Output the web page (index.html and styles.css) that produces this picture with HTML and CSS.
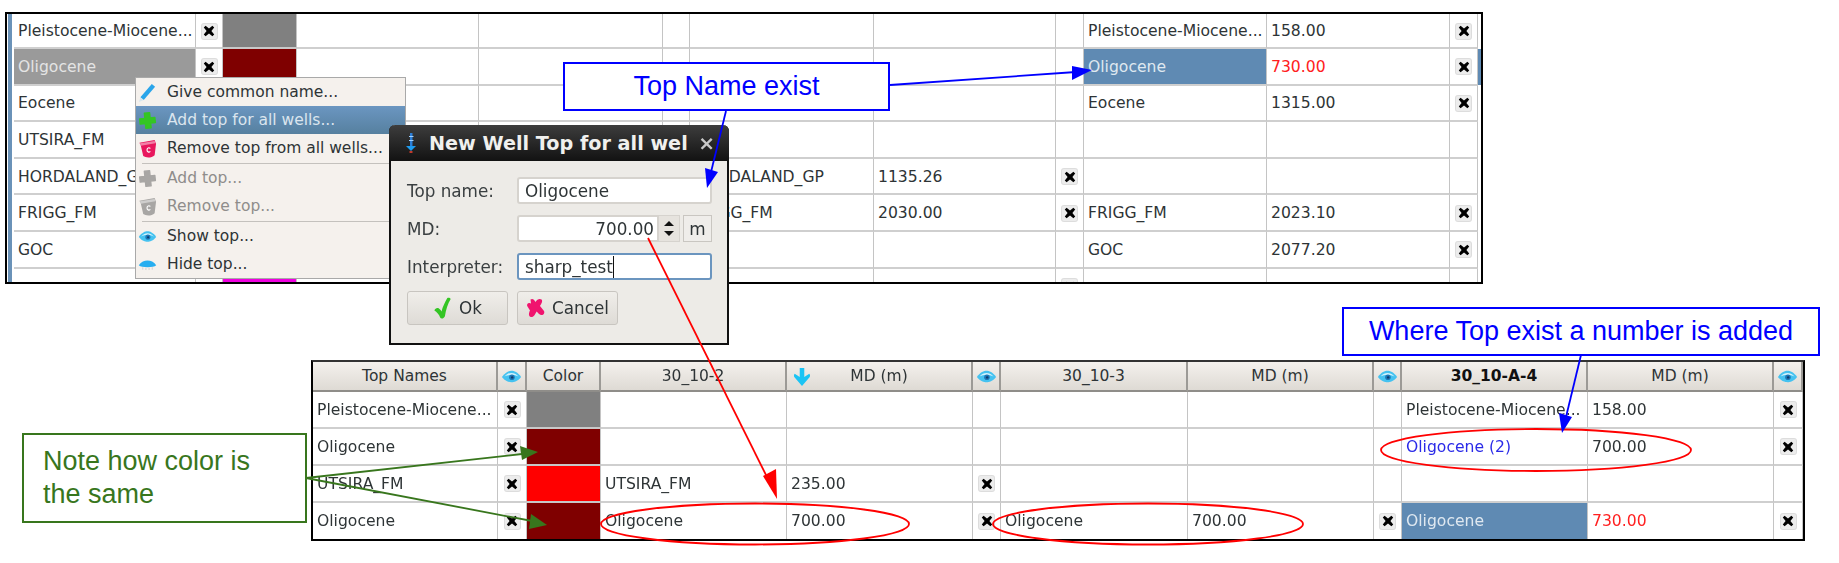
FILE: index.html
```html
<!DOCTYPE html>
<html lang="en">
<head>
<meta charset="utf-8">
<title>Well tops</title>
<link rel="stylesheet" href="styles.css">
</head>
<body>
<svg class="defs" width="0" height="0" aria-hidden="true">
  <symbol id="i-x" viewBox="0 0 12 12"><path d="M2.6 .8 6 3.6 9.4 .8 11.2 2.6 8.4 6l2.8 3.4-1.8 1.8L6 8.4 2.6 11.2 .8 9.4 3.6 6 .8 2.6z" fill="#000"/></symbol>
  <symbol id="i-eye" viewBox="0 0 24 16"><path d="M1 8.500C5 3 9 1.500 12 1.500s7 1.500 11 7c-4 5-8 6-11 6s-7-1-11-6z" fill="#45c2f0"/><path d="M4 8C7 5 9 4 12 4s5 1 8 4c-3-1.500-5-1.800-8-1.800S7 6.500 4 8z" fill="#d2f2fc"/><circle cx="12.500" cy="8.800" r="3.200" fill="#1c78b8"/><circle cx="12.800" cy="9" r="1.400" fill="#123a6a"/></symbol>
  <symbol id="i-hide" viewBox="0 0 24 16"><path d="M1 9C4 4.500 8 3 12 3s8 1.500 11 6c-2 1.800-6 2.500-11 2.500S3 10.800 1 9z" fill="#27aef0"/><path d="M6 11.500v3M10 12v3M14 12v3M18 11.500v3" stroke="#c9c9c9" stroke-width="1"/></symbol>
  <symbol id="i-pen" viewBox="0 0 20 20"><path d="M14.500 1 18 4 6 18l-3.500-3z" fill="#2aa5ea"/><path d="M2.500 15 6 18l-5 2z" fill="#d6e6ee"/></symbol>
  <symbol id="i-plus" viewBox="0 0 20 20"><path d="M7.500 2h5.500v5.500h5v5.500h-5v5h-5.500v-5H2V7.500h5.500z" fill="currentColor" stroke="currentColor" stroke-width="1.500" stroke-linejoin="round" transform="rotate(-6 10 10)"/></symbol>
  <symbol id="i-bin" viewBox="0 0 20 20"><path d="M1.500 4 17.500 1 19 5l-1.500 12c-3 3-9 3-12 1L3 7z" fill="currentColor"/><path d="M2 4.500 17.500 2l.8 2.500L3 7z" fill="#fff" opacity=".45"/><path d="M13 10c-1.500-1.500-3.500-.5-3.500 1.500s2 3 3.500 1.500" fill="none" stroke="#fff" stroke-width="1.200"/></symbol>
  <symbol id="i-down" viewBox="0 0 20 22"><path d="M7.500 1h5v10l5.500-3.500c1 1 1 2.500.5 3.500L10 21 1.500 11c-.5-1-.5-2.500.5-3.500L7.500 11z" fill="#1cc4f4"/></symbol>
  <symbol id="i-well" viewBox="0 0 12 22"><rect x="5" y="1" width="2.500" height="14" fill="#2c7fd8"/><path d="M1 14h10l-5 5z" fill="#1d9bf0"/><rect x="4" y="4" width="4.500" height="1" fill="#9fd0ff"/><rect x="4" y="8" width="4.500" height="1" fill="#9fd0ff"/><rect x="4.500" y="19" width="3" height="2" fill="#c0392b"/></symbol>
  <symbol id="i-ok" viewBox="0 0 20 24"><path d="M14.500 1c1.500-.5 3 0 3.500 1-3 5-5 11-6 18-1.500 3-4 3-5 1.500C6 18 3.500 15.500 1 14c.5-2 2.500-3 4-2.500 1.500 1 2.500 2 3.500 3.500 1-4.500 3.500-9.500 6-14z" fill="#34c524"/></symbol>
  <symbol id="i-no" viewBox="0 0 20 22"><path d="M4.500 2c2-1.500 3.500 0 5 2.500C11 2 13.500.5 15.500 2c1.500 1.500 0 4-1.500 6.500l4 5c1 2-.5 4.500-3 4-1.500-.5-3-2-4.500-3.500-1 2.500-3 6-5.500 5.500-2.500-.5-2.500-3.500-1-6.500L1.500 9C0 6.500 3 4.500 5 6z" fill="#f0146e"/></symbol>
</svg>

<div class="page">
  <section class="frame frame-top">
    <div class="strip"></div>
    <div class="grid grid-top">
      <div class="c"><span class="t">Pleistocene-Miocene...</span></div><div class="c m"><span class="cb"><svg><use href="#i-x"/></svg></span></div><div class="c fill gray"></div><div class="c"></div><div class="c"></div><div class="c"></div><div class="c"></div><div class="c"></div><div class="c"></div><div class="c"><span class="t">Pleistocene-Miocene...</span></div><div class="c"><span class="t">158.00</span></div><div class="c m"><span class="cb"><svg><use href="#i-x"/></svg></span></div>

      <div class="c sel-gray"><span class="t">Oligocene</span></div><div class="c m"><span class="cb"><svg><use href="#i-x"/></svg></span></div><div class="c fill maroon"></div><div class="c"></div><div class="c"></div><div class="c"></div><div class="c"></div><div class="c"></div><div class="c"></div><div class="c sel-blue"><span class="t">Oligocene</span></div><div class="c red"><span class="t">730.00</span></div><div class="c m"><span class="cb"><svg><use href="#i-x"/></svg></span></div>

      <div class="c"><span class="t">Eocene</span></div><div class="c"></div><div class="c"></div><div class="c"></div><div class="c"></div><div class="c"></div><div class="c"></div><div class="c"></div><div class="c"></div><div class="c"><span class="t">Eocene</span></div><div class="c"><span class="t">1315.00</span></div><div class="c m"><span class="cb"><svg><use href="#i-x"/></svg></span></div>

      <div class="c"><span class="t">UTSIRA_FM</span></div><div class="c"></div><div class="c"></div><div class="c"></div><div class="c"></div><div class="c"></div><div class="c"></div><div class="c"></div><div class="c"></div><div class="c"></div><div class="c"></div><div class="c"></div>

      <div class="c"><span class="t">HORDALAND_GP</span></div><div class="c"></div><div class="c"></div><div class="c"></div><div class="c"></div><div class="c"></div><div class="c"><span class="t">HORDALAND_GP</span></div><div class="c"><span class="t">1135.26</span></div><div class="c m"><span class="cb"><svg><use href="#i-x"/></svg></span></div><div class="c"></div><div class="c"></div><div class="c"></div>

      <div class="c"><span class="t">FRIGG_FM</span></div><div class="c"></div><div class="c"></div><div class="c"></div><div class="c"></div><div class="c"></div><div class="c"><span class="t">FRIGG_FM</span></div><div class="c"><span class="t">2030.00</span></div><div class="c m"><span class="cb"><svg><use href="#i-x"/></svg></span></div><div class="c"><span class="t">FRIGG_FM</span></div><div class="c"><span class="t">2023.10</span></div><div class="c m"><span class="cb"><svg><use href="#i-x"/></svg></span></div>

      <div class="c"><span class="t">GOC</span></div><div class="c"></div><div class="c"></div><div class="c"></div><div class="c"></div><div class="c"></div><div class="c"></div><div class="c"></div><div class="c"></div><div class="c"><span class="t">GOC</span></div><div class="c"><span class="t">2077.20</span></div><div class="c m"><span class="cb"><svg><use href="#i-x"/></svg></span></div>

      <div class="c"></div><div class="c"></div><div class="c fill magenta"></div><div class="c"></div><div class="c"></div><div class="c"></div><div class="c"></div><div class="c"></div><div class="c m"><span class="cb"><svg><use href="#i-x"/></svg></span></div><div class="c"></div><div class="c"></div><div class="c"></div>
    </div>
    <div class="rstrip"><div class="rstrip-mark"></div></div>
  </section>

  <section class="frame frame-bottom">
    <div class="grid grid-bottom">
      <div class="h">Top Names</div><div class="h"><svg class="eye"><use href="#i-eye"/></svg></div><div class="h">Color</div><div class="h">30_10-2</div><div class="h h-arrow"><svg class="sort"><use href="#i-down"/></svg>MD (m)</div><div class="h"><svg class="eye"><use href="#i-eye"/></svg></div><div class="h">30_10-3</div><div class="h">MD (m)</div><div class="h"><svg class="eye"><use href="#i-eye"/></svg></div><div class="h h-bold">30_10-A-4</div><div class="h">MD (m)</div><div class="h"><svg class="eye"><use href="#i-eye"/></svg></div>

      <div class="c"><span class="t">Pleistocene-Miocene...</span></div><div class="c m"><span class="cb"><svg><use href="#i-x"/></svg></span></div><div class="c fill gray"></div><div class="c"></div><div class="c"></div><div class="c"></div><div class="c"></div><div class="c"></div><div class="c"></div><div class="c"><span class="t">Pleistocene-Miocene...</span></div><div class="c"><span class="t">158.00</span></div><div class="c m"><span class="cb"><svg><use href="#i-x"/></svg></span></div>

      <div class="c"><span class="t">Oligocene</span></div><div class="c m"><span class="cb"><svg><use href="#i-x"/></svg></span></div><div class="c fill maroon"></div><div class="c"></div><div class="c"></div><div class="c"></div><div class="c"></div><div class="c"></div><div class="c"></div><div class="c bluetext"><span class="t">Oligocene (2)</span></div><div class="c"><span class="t">700.00</span></div><div class="c m"><span class="cb"><svg><use href="#i-x"/></svg></span></div>

      <div class="c"><span class="t">UTSIRA_FM</span></div><div class="c m"><span class="cb"><svg><use href="#i-x"/></svg></span></div><div class="c fill bright"></div><div class="c"><span class="t">UTSIRA_FM</span></div><div class="c"><span class="t">235.00</span></div><div class="c m"><span class="cb"><svg><use href="#i-x"/></svg></span></div><div class="c"></div><div class="c"></div><div class="c"></div><div class="c"></div><div class="c"></div><div class="c"></div>

      <div class="c"><span class="t">Oligocene</span></div><div class="c m"><span class="cb"><svg><use href="#i-x"/></svg></span></div><div class="c fill maroon"></div><div class="c"><span class="t">Oligocene</span></div><div class="c"><span class="t">700.00</span></div><div class="c m"><span class="cb"><svg><use href="#i-x"/></svg></span></div><div class="c"><span class="t">Oligocene</span></div><div class="c"><span class="t">700.00</span></div><div class="c m"><span class="cb"><svg><use href="#i-x"/></svg></span></div><div class="c sel-blue"><span class="t">Oligocene</span></div><div class="c red"><span class="t">730.00</span></div><div class="c m"><span class="cb"><svg><use href="#i-x"/></svg></span></div>
    </div>
  </section>

  <nav class="menu">
    <div class="mi"><svg class="mi-icon"><use href="#i-pen"/></svg>Give common name...</div>
    <div class="mi mi-active"><svg class="mi-icon green"><use href="#i-plus"/></svg>Add top for all wells...</div>
    <div class="mi"><svg class="mi-icon pink"><use href="#i-bin"/></svg>Remove top from all wells...</div>
    <div class="sep"></div>
    <div class="mi mi-off"><svg class="mi-icon dim"><use href="#i-plus"/></svg>Add top...</div>
    <div class="mi mi-off"><svg class="mi-icon dim"><use href="#i-bin"/></svg>Remove top...</div>
    <div class="sep"></div>
    <div class="mi"><svg class="mi-icon"><use href="#i-eye"/></svg>Show top...</div>
    <div class="mi"><svg class="mi-icon"><use href="#i-hide"/></svg>Hide top...</div>
  </nav>

  <div class="dialog">
    <header class="d-title"><svg class="d-icon"><use href="#i-well"/></svg><span class="d-text">New Well Top for all wel</span><span class="d-close">×</span></header>
    <div class="d-body">
      <div class="d-form">
        <label class="d-label">Top name:</label><div class="field">Oligocene</div>
        <label class="d-label">MD:</label>
        <div class="md-row"><div class="field field-num">700.00</div><div class="spin"><span class="up"></span><span class="dn"></span></div><div class="unit">m</div></div>
        <label class="d-label">Interpreter:</label><div class="field field-focus"><span class="caret">sharp_test</span></div>
      </div>
      <div class="d-btns">
        <div class="btn"><svg class="btn-icon"><use href="#i-ok"/></svg>Ok</div>
        <div class="btn"><svg class="btn-icon"><use href="#i-no"/></svg>Cancel</div>
      </div>
    </div>
  </div>

  <svg class="marks" viewBox="0 0 1839 563" aria-hidden="true">
    <ellipse cx="755" cy="524" rx="154" ry="20.500" class="ring"/>
    <ellipse cx="1148" cy="524" rx="155" ry="20.500" class="ring"/>
    <ellipse cx="1536" cy="450" rx="155" ry="21" class="ring"/>
    <line x1="648" y1="238" x2="770" y2="483" class="l-red"/><path d="M777 499 763 476 776 469z" fill="#f00"/>
    <line x1="726" y1="111" x2="711" y2="172" class="l-blue"/><path d="M707 188 705 168 718 172z" fill="#00f"/>
    <line x1="890" y1="85" x2="1076" y2="72" class="l-blue"/><path d="M1092 70 1072 80 1072 66z" fill="#00f"/>
    <line x1="1581" y1="355" x2="1566" y2="417" class="l-blue"/><path d="M1562 433 1559 413 1572 417z" fill="#00f"/>
    <line x1="306" y1="478" x2="522" y2="454" class="l-green"/><path d="M538 452 520 446 522 460z" fill="#38761d"/>
    <line x1="306" y1="478" x2="532" y2="521" class="l-green"/><path d="M547 525 529 529 531 514z" fill="#38761d"/>
  </svg>

  <div class="note note-a">Top Name exist</div>
  <div class="note note-b">Where Top exist a number is added</div>
  <div class="note note-c">Note how color is<br>the same</div>
</div>
</body>
</html>
```

FILE: styles.css
```css
* { box-sizing: border-box; }
html, body { margin: 0; background: #fff; }
.defs { position: absolute; }

.page {
  position: relative;
  width: 1839px;
  height: 563px;
  overflow: hidden;
  padding: 12px 0 0 5px;
  font-family: "DejaVu Sans", sans-serif;
  color: #2e3436;
  filter: blur(.45px);
}

.frame {
  display: flex;
  background: #fff;
  border: 2px solid #000;
  overflow: hidden;
}
.frame-top { width: 1478px; height: 272px; }
.frame-bottom { width: 1494px; height: 181px; margin: 76px 0 0 306px; border-top-color: #333; }

.strip { width: 7px; flex: none; background: #fff; padding: 0 2px 0 1px; }
.strip::before { content: ""; display: block; height: 100%; background: #6a92b8; }
.rstrip { width: 3px; flex: none; }
.rstrip-mark { height: 36px; margin-top: 35px; background: #5f8ab3; }

.grid { display: grid; flex: none; align-self: flex-start; }
.grid-top {
  grid-template-columns: 182px 27px 74px 182px 184px 27px 184px 182px 28px 183px 183px 28px;
  grid-template-rows: 35px repeat(6, 36.6px) 37px;
}
.grid-top .c { padding-top: 1px; }
.grid-bottom {
  grid-template-columns: 185px 29px 74px 186px 186px 28px 187px 186px 28px 186px 186px 29px;
  grid-template-rows: 30px 37px 37px 37px 38px;
}

.c {
  display: flex;
  align-items: center;
  min-width: 0;
  padding-left: 4px;
  border-right: 1px solid #c4c4c4;
  border-bottom: 2px solid #cfcfcf;
  font-size: 15.600px;
  white-space: nowrap;
  overflow: hidden;
}
.grid-top .m, .m { justify-content: center; padding-left: 0; }
.fill { border-bottom-color: #c8c8c8; }
.gray { background: #808080; }
.maroon { background: #7f0000; }
.bright { background: #f00; }
.magenta { background: #f000e0; }
.sel-gray { background: #9a9a9a; color: #e4e4e4; }
.sel-blue { background: #5f8ab3; color: #dfe8f0; }
.red { color: #ff2020; }
.bluetext { color: #2a2ae8; }

.cb {
  display: flex;
  align-items: center;
  justify-content: center;
  width: 15px;
  height: 15px;
  flex: none;
  background: #ececec;
  border-radius: 2px;
  box-shadow: 0 0 0 1px #ddd;
}
.cb svg { width: 12px; height: 12px; }

.h {
  position: relative;
  display: flex;
  align-items: center;
  justify-content: center;
  background: linear-gradient(#f4f1ed, #dedad4);
  border-right: 2px solid #9c9a96;
  border-bottom: 2px solid #8f8d89;
  font-size: 15.500px;
  white-space: nowrap;
}
.h-bold { font-weight: 700; color: #111; }
.eye { width: 21px; height: 15px; }
.sort { position: absolute; left: 5px; top: 5px; width: 20px; height: 20px; }

.menu {
  position: absolute;
  left: 135px;
  top: 77px;
  width: 271px;
  height: 202px;
  background: #f5f1ed;
  border: 1px solid #a9a9a9;
  font-size: 15.500px;
}
.mi {
  display: flex;
  align-items: center;
  height: 28px;
  padding-left: 2px;
  white-space: nowrap;
}
.mi-icon { width: 19px; height: 19px; flex: none; margin: 0 10px 0 0; }
.mi-active { background: linear-gradient(#6b96c1, #56809f); color: #dbe5ee; }
.mi-off { color: #8f8d8b; }
.sep { height: 1px; margin: 1px 0 0 6px; background: #c4c1bd; }
.green { color: #34c524; }
.pink { color: #e8175d; }
.dim { color: #a8a6a4; }

.dialog {
  position: absolute;
  left: 389px;
  top: 125px;
  width: 340px;
  height: 220px;
  background: #edebe7;
  border: 2px solid #111;
  border-top: 0;
  border-radius: 6px 6px 0 0;
  display: flex;
  flex-direction: column;
}
.d-title {
  display: flex;
  align-items: center;
  flex: none;
  height: 36px;
  padding: 0 14px 0 16px;
  margin: 0 -2px;
  border-radius: 6px 6px 0 0;
  background: linear-gradient(#3d3d3d, #121212);
  color: #f0f0ee;
  font-size: 19.200px;
  font-weight: 700;
  white-space: nowrap;
}
.d-icon { width: 12px; height: 22px; flex: none; margin-right: 12px; }
.d-text { flex: 1; overflow: hidden; }
.d-close { font-size: 20px; color: #c8c8c8; line-height: 1; }
.d-body { padding: 16px 15px 0 16px; font-size: 16.800px; }
.d-form {
  display: grid;
  grid-template-columns: 110px 195px;
  grid-auto-rows: 27px;
  row-gap: 11px;
  align-items: center;
}
.d-label { color: #3a3f41; }
.field {
  height: 27px;
  display: flex;
  align-items: center;
  padding: 0 6px;
  background: #fff;
  border: 2px solid #d6d3ce;
  border-radius: 3px;
  white-space: nowrap;
}
.field-num { flex: 1; justify-content: flex-end; padding-right: 3px; border-radius: 3px 0 0 3px; }
.field-focus { border-color: #6b95bf; }
.caret { border-right: 1px solid #111; padding-right: 0; line-height: 22px; }
.md-row { display: flex; align-items: stretch; height: 27px; }
.spin {
  width: 21px;
  flex: none;
  display: flex;
  flex-direction: column;
  justify-content: space-evenly;
  align-items: center;
  background: #e6e3de;
  border: 1px solid #d6d3ce;
  border-left: 0;
}
.up { border: 5px solid transparent; border-top: 0; border-bottom: 5px solid #111; }
.dn { border: 5px solid transparent; border-bottom: 0; border-top: 5px solid #111; }
.unit {
  width: 29px;
  margin-left: 3px;
  flex: none;
  display: flex;
  align-items: center;
  justify-content: center;
  background: #efedea;
  border: 1px solid #c9c6c1;
}
.d-btns { display: flex; gap: 9px; margin-top: 11px; }
.btn {
  width: 101px;
  height: 34px;
  display: flex;
  align-items: center;
  justify-content: center;
  gap: 6px;
  background: linear-gradient(#f0eeea, #dedbd6);
  border: 1px solid #c8c5c0;
  border-radius: 3px;
}
.btn-icon { width: 20px; height: 23px; flex: none; }

.marks { position: absolute; left: 0; top: 0; width: 1839px; height: 563px; }
.ring { fill: none; stroke: #f00; stroke-width: 1.800; }
.l-red { stroke: #f00; stroke-width: 1.800; }
.l-blue { stroke: #00f; stroke-width: 1.800; }
.l-green { stroke: #38761d; stroke-width: 1.800; }

.note {
  position: absolute;
  display: flex;
  align-items: center;
  justify-content: center;
  background: #fff;
  font-family: "Liberation Sans", Arial, sans-serif;
  font-size: 27px;
  line-height: 33px;
  white-space: nowrap;
}
.note-a { left: 563px; top: 62px; width: 327px; height: 49px; border: 2px solid #00f; color: #00f; }
.note-b { left: 1342px; top: 307px; width: 478px; height: 49px; border: 2px solid #00f; color: #00f; }
.note-c { left: 22px; top: 433px; width: 285px; height: 90px; border: 2px solid #38761d; color: #38761d; justify-content: flex-start; padding-left: 19px; }
```
